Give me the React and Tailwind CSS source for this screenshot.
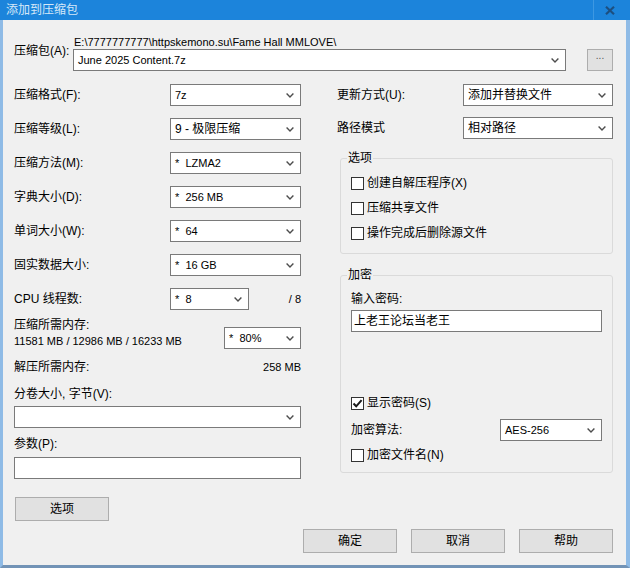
import React from 'react';

const Chevron = () => (
  <svg width="8" height="5" viewBox="0 0 8 5" className="shrink-0">
    <path d="M0.6 0.6 L4 4 L7.4 0.6" fill="none" stroke="#4d4d4d" strokeWidth="1.4" />
  </svg>
);

const Combo = ({ value, className = '', small }) => (
  <div className={`flex items-center justify-between h-[22px] bg-white border border-[#7a7a7a] pl-[4px] pr-[6px] ${className}`}>
    <span className={small ? 'whitespace-pre text-[11px]' : 'whitespace-pre'}>{value}</span>
    <Chevron />
  </div>
);

const Check = ({ label, checked }) => (
  <div className="flex items-center h-[16px]">
    <span className="w-[13px] h-[13px] border border-[#333333] bg-white flex items-center justify-center">
      {checked && (
        <svg width="11" height="11" viewBox="0 0 11 11">
          <path d="M1.5 5.5 L4.2 8.3 L9.6 2.2" fill="none" stroke="#1a1a1a" strokeWidth="2" />
        </svg>
      )}
    </span>
    <span className="ml-[3px] whitespace-nowrap">{label}</span>
  </div>
);

const Row = ({ label, value, small }) => (
  <div className="flex items-center justify-between h-[22px]">
    <span>{label}</span>
    <Combo value={value} small={small} className="w-[131px]" />
  </div>
);

const Btn = ({ children, className = '' }) => (
  <div className={`flex items-center justify-center h-[24px] w-[94px] bg-[#e1e1e1] border border-[#adadad] ${className}`}>
    {children}
  </div>
);

const App = () => {
  return (
    <div className="w-[630px] h-[571px] bg-white text-[12px] leading-[16px] text-black font-['Liberation_Sans','Noto_Sans_CJK_SC',sans-serif]">
      <div className="flex flex-col h-[568px]">
        {/* title bar */}
        <div className="flex items-center h-[20px] bg-[#1c84db] shrink-0">
          <span className="pl-[6px] text-[#d6e8f8] flex-1">添加到压缩包</span>
          <div className="flex items-center justify-center w-[33px] h-[20px] border-l border-[#3d98e2] mr-[4px]">
            <svg width="10" height="9" viewBox="0 0 10 9">
              <path d="M1 0.8 L9 8.2 M9 0.8 L1 8.2" stroke="#1d4f80" strokeWidth="2.2" />
            </svg>
          </div>
        </div>

        <div className="flex-1 bg-[#f0f0f0] border-l-[3px] border-r-[4px] border-b-[3px] border-l-[#8fbbe6] border-r-[#8fbbe6] border-b-[#7293b6] pl-[11px] pr-[13px] pt-[15px]">
          {/* archive */}
          <div className="flex items-center">
            <span className="w-[59px] shrink-0 pb-[4px]">压缩包(A):</span>
            <div className="flex-1 flex flex-col">
              <span className="h-[14px] leading-[14px] pl-[1px] whitespace-nowrap text-[11px]">{'E:\\7777777777\\httpskemono.su\\Fame Hall MMLOVE\\'}</span>
              <Combo value="June 2025 Content.7z" small className="w-[493px]" />
            </div>
            <div className="self-end flex items-start justify-center w-[26px] h-[22px] bg-[#e1e1e1] border border-[#adadad] text-[#555] text-[10px] leading-[12px]">
              ...
            </div>
          </div>

          <div className="flex gap-[36px] mt-[13px]">
            {/* left column */}
            <div className="w-[287px] flex flex-col">
              <div className="flex flex-col gap-[12px]">
                <Row label="压缩格式(F):" value="7z" small />
                <Row label="压缩等级(L):" value="9 - 极限压缩" />
                <Row label="压缩方法(M):" value="*  LZMA2" small />
                <Row label="字典大小(D):" value="*  256 MB" small />
                <Row label="单词大小(W):" value="*  64" small />
                <Row label="固实数据大小:" value="*  16 GB" small />
                <div className="flex items-center h-[22px]">
                  <span className="w-[156px]">CPU 线程数:</span>
                  <Combo value="*  8" small className="w-[79px]" />
                  <span className="flex-1 text-right text-[11px]">/ 8</span>
                </div>
              </div>

              <div className="flex items-end justify-between mt-[7px]">
                <div className="flex flex-col">
                  <span>压缩所需内存:</span>
                  <span className="text-[11px]">11581 MB / 12986 MB / 16233 MB</span>
                </div>
                <Combo value="*  80%" small className="w-[77px]" />
              </div>

              <div className="flex justify-between mt-[10px]">
                <span>解压所需内存:</span>
                <span className="text-[11px]">258 MB</span>
              </div>

              <span className="mt-[11px]">分卷大小, 字节(V):</span>
              <Combo value="" className="w-[287px] mt-[4px]" />

              <span className="mt-[8px]">参数(P):</span>
              <div className="h-[22px] bg-white border border-[#7a7a7a] mt-[5px]"></div>

              <Btn className="mt-[18px] ml-[1px] w-[93px]">选项</Btn>
            </div>

            {/* right column */}
            <div className="w-[276px] flex flex-col">
              <div className="flex items-center justify-between h-[22px]">
                <span>更新方式(U):</span>
                <Combo value="添加并替换文件" className="w-[150px]" />
              </div>
              <div className="flex items-center justify-between h-[22px] mt-[11px]">
                <span>路径模式</span>
                <Combo value="相对路径" className="w-[150px]" />
              </div>

              <fieldset className="ml-[3px] mt-[12px] border border-[#dadada] rounded-[3px]">
                <legend className="ml-[6px] px-[1px] leading-[14px]">选项</legend>
                <div className="flex flex-col gap-[9px] pl-[10px] pt-[10px] pb-[12px]">
                  <Check label="创建自解压程序(X)" />
                  <Check label="压缩共享文件" />
                  <Check label="操作完成后删除源文件" />
                </div>
              </fieldset>

              <fieldset className="ml-[3px] mt-[14px] border border-[#dadada] rounded-[3px]">
                <legend className="ml-[6px] px-[1px] leading-[14px]">加密</legend>
                <div className="flex flex-col px-[10px] pt-[9px] pb-[9px]">
                  <span>输入密码:</span>
                  <div className="h-[22px] bg-white border border-[#7a7a7a] mt-[3px] pl-[2px] flex items-center">
                    上老王论坛当老王
                  </div>
                  <div className="mt-[63px]">
                    <Check label="显示密码(S)" checked />
                  </div>
                  <div className="flex items-center justify-between h-[22px] mt-[8px]">
                    <span>加密算法:</span>
                    <Combo value="AES-256" small className="w-[102px]" />
                  </div>
                  <div className="mt-[6px]">
                    <Check label="加密文件名(N)" />
                  </div>
                </div>
              </fieldset>
            </div>
          </div>

          {/* bottom buttons */}
          <div className="flex justify-end gap-[14px] mt-[8px]">
            <Btn>确定</Btn>
            <Btn>取消</Btn>
            <Btn>帮助</Btn>
          </div>
        </div>
      </div>
    </div>
  );
};

export default App;
